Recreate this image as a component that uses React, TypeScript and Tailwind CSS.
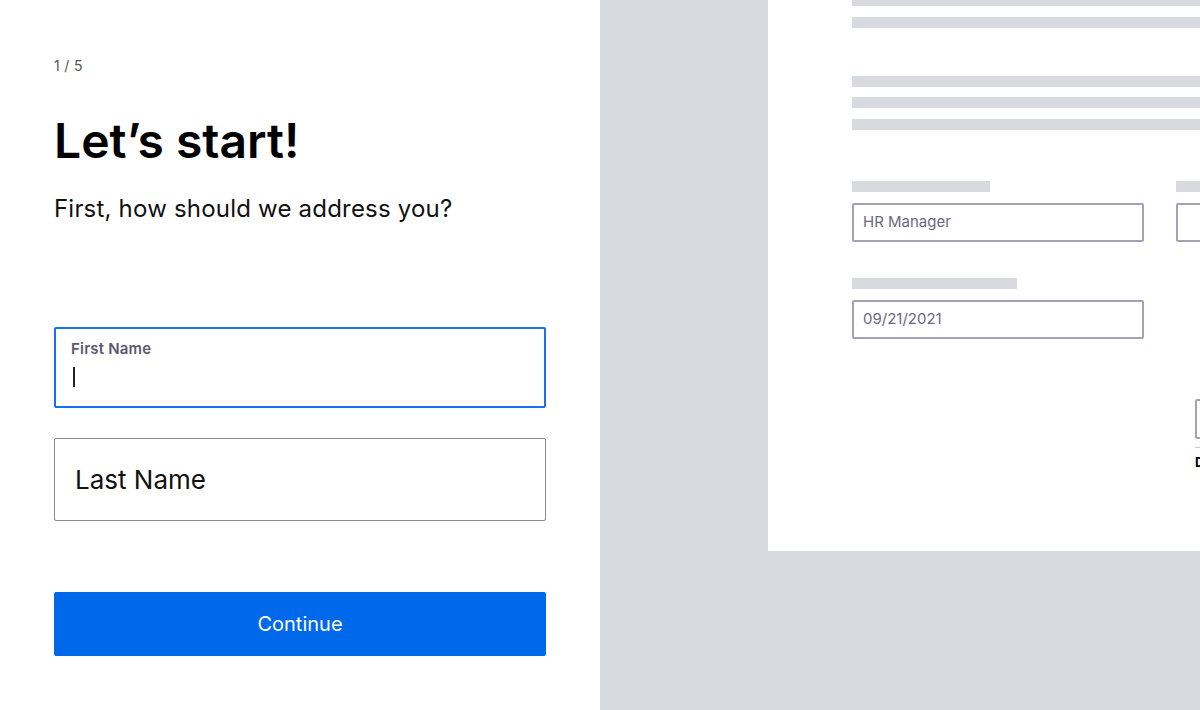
import React from 'react';

const Bar = ({ className }: { className: string }) => <div className={`bg-[#d9dadf] ${className}`} />;

const DocField = ({ value }: { value?: string }) => (
    <div className="h-[39px] w-[292px] border-2 border-[#a3a1b6] rounded-[2px] flex items-center px-[9px] text-[15px] text-[#6b6880]">
        {value}
    </div>
);

const App = () => {
    return (
        <div className="w-[1200px] h-[710px] flex overflow-hidden bg-white" style={{ fontFamily: 'Inter, "Noto Sans", sans-serif' }}>
            {/* form side */}
            <div className="w-[600px] shrink-0 pl-[54px] pt-[57px]">
                <p className="text-[14px] text-[#555] tracking-wide leading-[18px]">1 / 5</p>
                <h1 className="mt-[42px] text-[48px] font-semibold text-black leading-none">Let’s start!</h1>
                <p className="mt-[32px] text-[24px] text-[#111] leading-none tracking-[0.2px]">First, how should we address you?</p>

                <div className="mt-[106px] w-[492px] h-[81px] border-2 border-[#1a6ff0] rounded-[2px] px-[15px] pt-[9px]">
                    <div className="text-[15px] font-semibold text-[#5b5873] tracking-[0.2px]">First Name</div>
                    <div className="mt-[6px] ml-[2px] w-[2px] h-[20px] bg-[#222]" />
                </div>

                <div className="mt-[30px] w-[492px] h-[83px] border border-[#8a8a8e] rounded-[2px] flex items-center px-[20px]">
                    <span className="text-[26px] text-[#111] leading-none">Last Name</span>
                </div>

                <button className="mt-[71px] w-[492px] h-[64px] bg-[#0068ea] rounded-[2px] text-white text-[20px]">
                    Continue
                </button>
            </div>

            {/* document preview */}
            <div className="flex-1 bg-[#d9dadf] pl-[168px] overflow-hidden">
                <div className="w-[500px] h-[551px] bg-white pl-[84px]">
                    <Bar className="h-[6px] w-full" />
                    <Bar className="mt-[11px] h-[11px] w-full" />
                    <Bar className="mt-[48px] h-[11px] w-full" />
                    <Bar className="mt-[10px] h-[11px] w-full" />
                    <Bar className="mt-[11px] h-[11px] w-full" />

                    <div className="mt-[51px] flex gap-[32px]">
                        <div>
                            <Bar className="h-[11px] w-[138px]" />
                            <div className="mt-[11px]"><DocField value="HR Manager" /></div>
                            <Bar className="mt-[36px] h-[11px] w-[165px]" />
                            <div className="mt-[11px]"><DocField value="09/21/2021" /></div>
                        </div>
                        <div>
                            <Bar className="h-[11px] w-[100px]" />
                            <div className="mt-[11px]"><DocField /></div>
                        </div>
                    </div>

                    <div className="mt-[60px] ml-[343px] w-[100px]">
                        <div className="h-[40px] border-2 border-[#a3a1b6] rounded-[2px]" />
                        <div className="mt-[8px] h-[1px] bg-[#c9c8d2]" />
                        <div className="mt-[8px] text-[13px] font-bold text-black leading-none">Date</div>
                    </div>
                </div>
            </div>
        </div>
    );
};

export default App;
